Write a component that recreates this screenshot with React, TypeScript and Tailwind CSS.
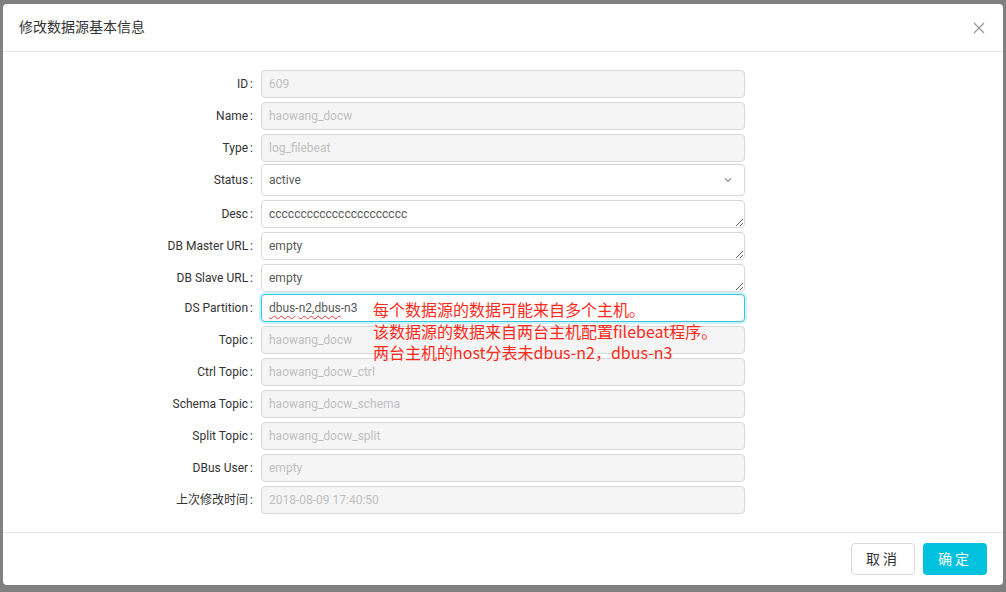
import React from 'react';

type Row = {
  label: string;
  value: string;
  kind: 'disabled' | 'select' | 'textarea' | 'focus';
  mt: string;
};

const rows: Row[] = [
  { label: 'ID', value: '609', kind: 'disabled', mt: 'mt-0' },
  { label: 'Name', value: 'haowang_docw', kind: 'disabled', mt: 'mt-[4px]' },
  { label: 'Type', value: 'log_filebeat', kind: 'disabled', mt: 'mt-[4px]' },
  { label: 'Status', value: 'active', kind: 'select', mt: 'mt-[2px]' },
  { label: 'Desc', value: 'cccccccccccccccccccccc', kind: 'textarea', mt: 'mt-[4px]' },
  { label: 'DB Master URL', value: 'empty', kind: 'textarea', mt: 'mt-[4px]' },
  { label: 'DB Slave URL', value: 'empty', kind: 'textarea', mt: 'mt-[4px]' },
  { label: 'DS Partition', value: 'dbus-n2,dbus-n3', kind: 'focus', mt: 'mt-[2px]' },
  { label: 'Topic', value: 'haowang_docw', kind: 'disabled', mt: 'mt-[4px]' },
  { label: 'Ctrl Topic', value: 'haowang_docw_ctrl', kind: 'disabled', mt: 'mt-[4px]' },
  { label: 'Schema Topic', value: 'haowang_docw_schema', kind: 'disabled', mt: 'mt-[4px]' },
  { label: 'Split Topic', value: 'haowang_docw_split', kind: 'disabled', mt: 'mt-[4px]' },
  { label: 'DBus User', value: 'empty', kind: 'disabled', mt: 'mt-[4px]' },
  { label: '上次修改时间', value: '2018-08-09 17:40:50', kind: 'disabled', mt: 'mt-[4px]' },
];

const font = "font-['Roboto','Noto_Sans_CJK_SC',sans-serif]";

const Field = ({ row }: { row: Row }) => {
  if (row.kind === 'select') {
    return (
      <div className="w-[484px] h-[32px] border border-[#d9d9d9] rounded-[4px] bg-white flex items-center justify-between pl-[7px] pr-[11px] text-[12px] text-[#595959]">
        <span>{row.value}</span>
        <svg width="10" height="10" viewBox="0 0 10 10" fill="none">
          <path d="M2 3.5 L5 6.5 L8 3.5" stroke="#8c8c8c" strokeWidth="1.1" />
        </svg>
      </div>
    );
  }
  if (row.kind === 'textarea') {
    return (
      <textarea
        readOnly
        rows={1}
        value={row.value}
        className={`w-[484px] h-[28px] border border-[#d9d9d9] rounded-[4px] bg-white px-[7px] py-[5px] text-[12px] leading-[16px] text-[#595959] outline-none resize-y overflow-hidden block ${font}`}
      />
    );
  }
  if (row.kind === 'focus') {
    return (
      <div className="relative w-[484px] h-[28px] border border-[#36c6e0] rounded-[4px] bg-white flex items-center px-[7px] text-[12px] text-[#595959] shadow-[0_0_0_2px_rgba(0,193,222,0.2)]">
        <span className="underline decoration-wavy decoration-[#e53935] decoration-1 underline-offset-[3px]">dbus</span>
        <span>-</span>
        <span className="underline decoration-wavy decoration-[#e53935] decoration-1 underline-offset-[3px]">n2,dbus</span>
        <span>-n3</span>
      </div>
    );
  }
  return (
    <div className="w-[484px] h-[28px] border border-[#d9d9d9] rounded-[4px] bg-[#f5f5f5] flex items-center px-[7px] text-[12px] text-[#bfbfbf]">
      {row.value}
    </div>
  );
};

export default function App() {
  return (
    <div className={`w-[1006px] h-[592px] bg-[#808080] pt-[4px] pl-[3px] ${font}`}>
      <div className="w-[1000px] h-[581px] bg-white rounded-[4px] flex flex-col">
        {/* Header */}
        <div className="h-[48px] flex items-center justify-between pl-[16px] pr-[18px] border-b border-[#e8e8e8] text-[14px] text-[#333]">
          <span>修改数据源基本信息</span>
          <svg width="12" height="12" viewBox="0 0 12 12">
            <path d="M1 1 L11 11 M11 1 L1 11" stroke="#999" strokeWidth="1.3" />
          </svg>
        </div>

        {/* Body */}
        <div className="relative flex-1 pt-[18px]">
          {rows.map((row) => (
            <div key={row.label} className={`flex items-center ${row.mt}`}>
              <div className="w-[258px] pr-[8px] flex justify-end text-[12px] text-[#333]">
                <span>{row.label}</span>
                <span className="ml-[2px]">:</span>
              </div>
              <Field row={row} />
            </div>
          ))}

          {/* Annotation overlay */}
          <div className="absolute left-[370px] top-[247px] text-[16px] leading-[21.5px] text-[#ff2a1a] font-['Noto_Sans_CJK_SC',sans-serif] pointer-events-none">
            <div>每个数据源的数据可能来自多个主机。</div>
            <div>该数据源的数据来自两台主机配置filebeat程序。</div>
            <div>两台主机的host分表未dbus-n2，dbus-n3</div>
          </div>
        </div>

        {/* Footer */}
        <div className="h-[53px] border-t border-[#e8e8e8] flex items-center justify-end gap-[8px] pr-[16px]">
          <button className="w-[64px] h-[32px] border border-[#d9d9d9] rounded-[4px] bg-white text-[14px] text-[#333] tracking-[3px]">
            取消
          </button>
          <button className="w-[64px] h-[32px] rounded-[4px] bg-[#00c1de] text-[14px] text-white tracking-[3px]">
            确定
          </button>
        </div>
      </div>
    </div>
  );
}
